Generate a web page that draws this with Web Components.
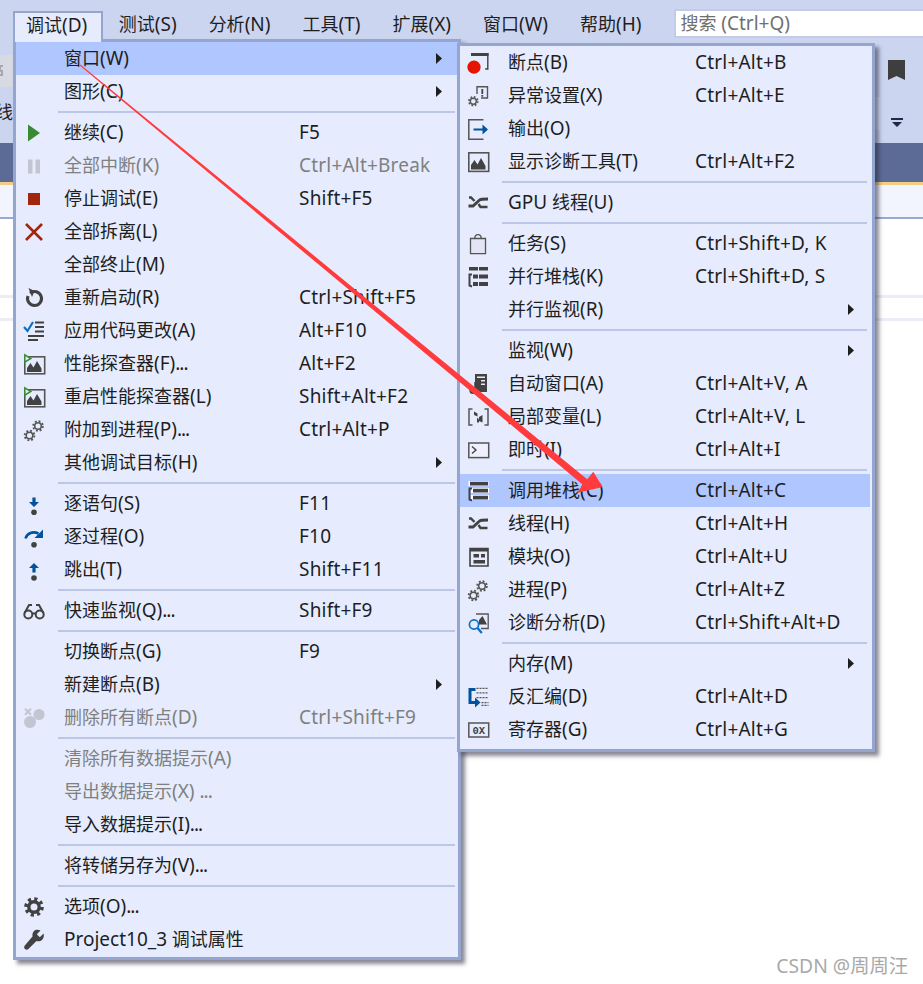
<!DOCTYPE html>
<html lang="zh"><head><meta charset="utf-8"><title>VS</title>
<style>
html,body{margin:0;padding:0;background:#fff;}
body{width:923px;height:984px;overflow:hidden;font-family:"Noto Sans","Noto Sans CJK SC",sans-serif;}
</style></head><body>
<vs-shell>
  <vs-menubar slot="bar">
    <vs-tab open>调试(D)</vs-tab><vs-tab>测试(S)</vs-tab><vs-tab>分析(N)</vs-tab><vs-tab>工具(T)</vs-tab><vs-tab>扩展(X)</vs-tab><vs-tab>窗口(W)</vs-tab><vs-tab>帮助(H)</vs-tab>
    <vs-search>搜索 (Ctrl+Q)</vs-search>
  </vs-menubar>
  <vs-menu style="--l:13px;--t:39px;--w:448px;--pb:1px;--label:235px;--z:2;--sepr:3px;--itemr:0px">
    <vs-item active arrow>窗口(W)</vs-item>
    <vs-item arrow>图形(C)</vs-item>
    <vs-sep></vs-sep>
    <vs-item icon="play" key="F5">继续(C)</vs-item>
    <vs-item icon="pause" key="Ctrl+Alt+Break" dis>全部中断(K)</vs-item>
    <vs-item icon="stop" key="Shift+F5">停止调试(E)</vs-item>
    <vs-item icon="x">全部拆离(L)</vs-item>
    <vs-item>全部终止(M)</vs-item>
    <vs-item icon="restart" key="Ctrl+Shift+F5">重新启动(R)</vs-item>
    <vs-item icon="apply" key="Alt+F10">应用代码更改(A)</vs-item>
    <vs-item icon="perf" key="Alt+F2">性能探查器(F)...</vs-item>
    <vs-item icon="perf" key="Shift+Alt+F2">重启性能探查器(L)</vs-item>
    <vs-item icon="gears" key="Ctrl+Alt+P">附加到进程(P)...</vs-item>
    <vs-item arrow>其他调试目标(H)</vs-item>
    <vs-sep></vs-sep>
    <vs-item icon="into" key="F11">逐语句(S)</vs-item>
    <vs-item icon="over" key="F10">逐过程(O)</vs-item>
    <vs-item icon="out" key="Shift+F11">跳出(T)</vs-item>
    <vs-sep></vs-sep>
    <vs-item icon="glasses" key="Shift+F9">快速监视(Q)...</vs-item>
    <vs-sep></vs-sep>
    <vs-item key="F9">切换断点(G)</vs-item>
    <vs-item arrow>新建断点(B)</vs-item>
    <vs-item icon="delbp" key="Ctrl+Shift+F9" dis>删除所有断点(D)</vs-item>
    <vs-sep></vs-sep>
    <vs-item dis>清除所有数据提示(A)</vs-item>
    <vs-item dis>导出数据提示(X) ...</vs-item>
    <vs-item>导入数据提示(I)...</vs-item>
    <vs-sep></vs-sep>
    <vs-item>将转储另存为(V)...</vs-item>
    <vs-sep></vs-sep>
    <vs-item icon="gear">选项(O)...</vs-item>
    <vs-item icon="wrench">Project10_3 调试属性</vs-item>
  </vs-menu>
  <vs-menu style="--l:457px;--t:43px;--w:418px;--pb:3px;--label:187px;--z:3;--sepr:5px;--itemr:2px">
    <vs-item icon="bp" key="Ctrl+Alt+B">断点(B)</vs-item>
    <vs-item icon="exc" key="Ctrl+Alt+E">异常设置(X)</vs-item>
    <vs-item icon="output">输出(O)</vs-item>
    <vs-item icon="chart" key="Ctrl+Alt+F2">显示诊断工具(T)</vs-item>
    <vs-sep></vs-sep>
    <vs-item icon="thread">GPU 线程(U)</vs-item>
    <vs-sep></vs-sep>
    <vs-item icon="task" key="Ctrl+Shift+D, K">任务(S)</vs-item>
    <vs-item icon="pstack" key="Ctrl+Shift+D, S">并行堆栈(K)</vs-item>
    <vs-item arrow>并行监视(R)</vs-item>
    <vs-sep></vs-sep>
    <vs-item arrow>监视(W)</vs-item>
    <vs-item icon="auto" key="Ctrl+Alt+V, A">自动窗口(A)</vs-item>
    <vs-item icon="locals" key="Ctrl+Alt+V, L">局部变量(L)</vs-item>
    <vs-item icon="imm" key="Ctrl+Alt+I">即时(I)</vs-item>
    <vs-sep></vs-sep>
    <vs-item icon="callstack" key="Ctrl+Alt+C" active>调用堆栈(C)</vs-item>
    <vs-item icon="thread" key="Ctrl+Alt+H">线程(H)</vs-item>
    <vs-item icon="module" key="Ctrl+Alt+U">模块(O)</vs-item>
    <vs-item icon="gears" key="Ctrl+Alt+Z">进程(P)</vs-item>
    <vs-item icon="diag" key="Ctrl+Shift+Alt+D">诊断分析(D)</vs-item>
    <vs-sep></vs-sep>
    <vs-item arrow>内存(M)</vs-item>
    <vs-item icon="disasm" key="Ctrl+Alt+D">反汇编(D)</vs-item>
    <vs-item icon="reg" key="Ctrl+Alt+G">寄存器(G)</vs-item>
  </vs-menu>
  <vs-callout></vs-callout>
  <vs-mark>CSDN @周周汪</vs-mark>
</vs-shell>
<script>
const D='#424242',B='#00539c',BG='#e6ecfd';
const gear=(x,y,r=5)=>{const R=r*.88,c=2*Math.PI*R/16;return `<circle cx="${x}" cy="${y}" r="${r*.6}" fill="none" stroke="#555" stroke-width="${r*.28}"/><circle cx="${x}" cy="${y}" r="${R}" fill="none" stroke="#555" stroke-width="${r*.34}" stroke-dasharray="${c} ${c}"/>`;};
const chart=`<rect x=".8" y=".8" width="19.9" height="18.6" fill="${BG}" stroke="#555" stroke-width="1.6"/><path d="M3 17.5V13l3.5-5 3 4.5L13 6l4.5 8v3.5z" fill="${D}"/>`;
const thread=`<g fill="none" stroke="${D}"><path d="M.5 13H5l6-5.5C12.5 6 14 6 20 6" stroke-width="2.8"/><path d="M1 4.5h2L6.5 8" stroke-width="2.4"/><path d="M10.5 11l2 3h7" stroke-width="2.4"/></g>`;
const ICONS={
play:`<path d="M4 1.5L16 10 4 18.5z" fill="#388a34"/>`,
pause:`<path d="M4 3.5h4.5v14H4zM11.5 3.5H16v14h-4.5z" fill="#c2c6d2"/>`,
stop:`<path d="M4 4h12v12H4z" fill="#a1260d"/>`,
x:`<path d="M2 2l16 16M18 2L2 18" stroke="#a1260d" stroke-width="2.6" fill="none"/>`,
restart:`<path d="M6 5.2A7 7 0 1 1 4 8" fill="none" stroke="${D}" stroke-width="3"/><path d="M4.5 0l6 3-2.5 6z" fill="${D}"/>`,
apply:`<path d="M0 6l3.5 4L9 1" fill="none" stroke="#0e70c0" stroke-width="2.2"/><path d="M11 .5h9v2h-9zM11 5h9v2h-9zM11 9.5h9v2h-9zM4 14h16v2H4zM4 18h10v2H4z" fill="${D}"/>`,
perf:`<rect x=".8" y="2.8" width="19.9" height="17" fill="${BG}" stroke="#555" stroke-width="1.6"/><path d="M3 18v-4l3.5-5 3 4.5L13 7l4.5 7.5V18z" fill="${D}"/><path d="M.8 .8l6 3.7-6 3.7z" fill="${BG}" stroke="#388a34" stroke-width="1.5"/>`,
gears:gear(14,6,5.5)+gear(5.5,15.5,5.5),
into:`<path d="M8.4 3.5h3.2V8H15l-5 5-5-5h3.4z" fill="${B}"/><circle cx="10" cy="18.2" r="2.8" fill="${D}"/>`,
over:`<path d="M1.5 11.5C3 6 9 4 14.5 6.5" fill="none" stroke="${B}" stroke-width="2.6"/><path d="M19 2.5V11h-8.5z" fill="${B}"/><circle cx="10" cy="17.7" r="2.8" fill="${D}"/>`,
out:`<path d="M10 3l5 5h-3.4v4.5H8.4V8H5z" fill="${B}"/><circle cx="10" cy="18" r="2.8" fill="${D}"/>`,
glasses:`<g fill="none" stroke="${D}" stroke-width="2"><circle cx="4.3" cy="13.5" r="4"/><circle cx="15.7" cy="13.5" r="4"/><path d="M8 12.5h4M.6 12L5 4h3M19.4 12L15 4h-3"/></g>`,
delbp:`<circle cx="6" cy="14" r="6" fill="#c2c6d2"/><circle cx="15" cy="6.5" r="5.6" fill="#c2c6d2"/><path d="M1 .8l6 6M7 .8l-6 6" stroke="#c2c6d2" stroke-width="2"/>`,
gear:`<circle cx="10" cy="10" r="5.2" fill="none" stroke="${D}" stroke-width="3.4"/><circle cx="10" cy="10" r="8" fill="none" stroke="${D}" stroke-width="3.6" stroke-dasharray="3.14 3.14"/>`,
wrench:`<path d="M19.5 3.5L15.8 7.2 12.8 4.2 16.5.5C13-1 8-.2 8.5 6.5L.8 15.5c-1 1.2-.8 2.6.2 3.5 1 1 2.4 1 3.4 0L12.5 11c4.5 1.5 8.5-2.5 7-7.5z" fill="${D}"/>`,
bp:`<path d="M3 0.8h16.8v15.2h-2.6" fill="none" stroke="${D}" stroke-width="1.4"/><path d="M3 0h17.5v3H3z" fill="${D}"/><circle cx="6" cy="14.2" r="6.6" fill="#e51400"/>`,
exc:`<path d="M9 8V.8h10.5V12H13" fill="none" stroke="#555" stroke-width="1.4"/><path d="M13.4 3h1.8v5h-1.8zM13.4 9h1.8v1.8h-1.8z" fill="${D}"/>`+gear(5.3,15.2,5),
output:`<path d="M15.5 .8H.8v19.5h14.7" fill="none" stroke="#555" stroke-width="1.5"/><path d="M5.5 9.5h9V5.5l5.5 5-5.5 5v-4h-9z" fill="${B}"/>`,
chart:chart,
thread:thread,
task:`<path d="M2.5 4.5h15v15.2h-15z" fill="#e3e5f6" stroke="#555" stroke-width="1.3"/><path d="M6.8 4.5C6.8 1.5 8 .6 10 .6s3.2.9 3.2 3.9" fill="none" stroke="#555" stroke-width="1.4"/>`,
pstack:`<path d="M1 0h9v3.5H1zM11 0h9v3.5h-9zM5 7.5h5v4H5zM11 7.5h9v4h-9zM5 15h5v4H5zM11 15h9v4h-9z" fill="${D}"/><path d="M4 7.5H1.5v11l2.5 1" fill="none" stroke="${D}" stroke-width="2"/>`,
auto:`<path d="M7 0h12v18H7z" fill="${D}"/><path d="M9 2.5h8v1.6H9zM13 6h4v1.6h-4zM13 9.5h4v1.6h-4z" fill="${BG}"/><circle cx="5" cy="16.5" r="3.6" fill="${D}"/><path d="M7 8v8" stroke="${D}" stroke-width="1.5"/>`,
locals:`<path d="M4.5 2H1v16h3.5M16.5 2H20v16h-3.5" fill="none" stroke="#555" stroke-width="1.5"/><path d="M6 4.5l3.5 2v3L6 8zM14.5 8l-3.5 2v4l3.5 1.5zM9 10.5l2 2v3H9z" fill="${D}"/>`,
imm:`<rect x=".8" y="3" width="19.9" height="14.6" fill="#eef1fd" stroke="#555" stroke-width="1.5"/><path d="M4 6.5l4 3.5-4 3.5" fill="none" stroke="${D}" stroke-width="1.4"/>`,
callstack:`<path d="M.5 0h20v5H.5zM3 7h18v5H3zM3 14h18v5H3z" fill="#fff"/><path d="M2 .8h18v3.6H2zM5 7.8h15v3.6H5zM5 14.8h15v3.6H5z" fill="${D}"/><path d="M4 7.5H1.5v11l2.5 1" fill="none" stroke="${D}" stroke-width="2"/>`,
module:`<path d="M2 1.5h18v17.5H2z" fill="${BG}" stroke="${D}" stroke-width="1.6"/><path d="M2 1h18v3.5H2zM5.5 7h5.5v3.5H5.5zM13 7h4v3.5h-4zM5.5 13h11.5v3.5H5.5z" fill="${D}"/>`,
diag:`<path d="M8 1h12.2v14.5H13" fill="${BG}" stroke="#555" stroke-width="1.3"/><path d="M11 7l3.5-4 4.5 8.5h-8z" fill="${D}"/><circle cx="6" cy="11.5" r="4.6" fill="${BG}" stroke="#0e70c0" stroke-width="1.7"/><path d="M9.5 15l4.3 5" stroke="#0e70c0" stroke-width="2.3"/>`,
disasm:`<path d="M.5 1h7v3H3.5v10H7v-3.5l5.5 5-5.5 5V17H.5z" fill="${B}"/><path d="M8.5 1.4h12M8.5 5.9h12M8.5 10.7h12M13.5 15.6h7M13.5 18.4h7" stroke="#555" stroke-width="1.3" stroke-dasharray="2 1" fill="none"/>`,
reg:`<rect x=".8" y="3" width="19.9" height="14" fill="none" stroke="#555" stroke-width="1.5"/><text x="10.7" y="14" text-anchor="middle" font-family="Liberation Mono,monospace" font-size="10.5" font-weight="700" fill="${D}">0X</text>`
};
/* Latin runs are set a size up from the CJK around them, as in the reference; trailing dots are tighter */
function latin(host){
  if(host.dataset.done)return;host.dataset.done='1';
  [...host.childNodes].forEach(n=>{
    if(n.nodeType!==3)return;
    const f=document.createDocumentFragment();
    n.textContent.split(/([\x21-\x7e]+(?: [\x21-\x7e]+)*)/).forEach((p,i)=>{
      if(!p)return;
      if(i%2){
        const s=document.createElement('span');
        const m=p.match(/^(.*?)(\.\.\.)$/);
        if(m){s.textContent=m[1];f.append(s);const d=document.createElement('span');d.className='d';d.textContent=m[2];f.append(d);}
        else{s.textContent=p;f.append(s);}
      } else f.append(p);
    });
    n.replaceWith(f);
  });
}
const LAT=`::slotted(span){font-size:19px;}::slotted(span.d){letter-spacing:-1px;}`;
function el(name,html,wrap){customElements.define(name,class extends HTMLElement{
  constructor(){super();this.attachShadow({mode:'open'}).innerHTML=html;}
  connectedCallback(){if(wrap)latin(this);}
});}
class Shell extends HTMLElement{constructor(){super();this.attachShadow({mode:'open'}).innerHTML=`<style>
:host{display:flex;flex-direction:column;position:relative;width:923px;height:984px;overflow:hidden;background:#fff;font-size:18px;color:#1e1e1e;}
.tools{height:101px;background:#ccd5f0;display:flex;justify-content:space-between;flex:none;}
.left{width:13px;display:flex;flex-direction:column;padding-top:13px;overflow:hidden;}
.btn{height:32px;background:#d8d9e2;display:flex;align-items:center;}
.clip{height:33px;margin-top:9px;line-height:33px;width:13px;overflow:hidden;white-space:nowrap;direction:rtl;}
.right{width:48px;display:flex;padding-top:18px;gap:8px;}
.lite{width:5px;height:33px;margin-top:37px;background:#d9e0f5;}
.rcol{display:flex;flex-direction:column;align-items:center;gap:38px;width:17px;}
.band{height:39px;background:#5c6b96;flex:none;}
.orange{height:3px;background:#f5cc84;flex:none;}
.tabs{height:32px;background:#f2f5fe;border-bottom:2px solid #9aaace;flex:none;}
.doc{flex:1;padding-top:76px;display:flex;flex-direction:column;gap:20px;}
.rule{height:3px;background:#ecedf4;}
</style>
<slot name="bar"></slot>
<div class="tools">
  <div class="left"><div class="btn"><svg width="4" height="14"><path d="M0 1h3v2H1v3h2v6H0v-2h1V8H0z" fill="#a8a8b0"/></svg></div><div class="clip">线</div></div>
  <div class="right"><div class="lite"></div><div class="rcol">
    <svg width="17" height="20" viewBox="0 0 17 20"><path d="M0 0h17v20l-8.5-4L0 20z" fill="#3e3e3e"/></svg>
    <svg width="12" height="9" viewBox="0 0 12 9"><path d="M0 0h12v2H0zM1 4h10L6 9z" fill="#1e2a4a"/></svg>
  </div></div>
</div>
<div class="band"></div><div class="orange"></div><div class="tabs"></div>
<div class="doc"><div class="rule"></div><div class="rule"></div></div>
<slot></slot>`;}}
customElements.define('vs-shell',Shell);
el('vs-menubar',`<style>:host{display:flex;height:42px;background:#ccd5f0;padding-left:13px;box-sizing:border-box;flex:none;}</style><slot></slot>`);
class Tab extends HTMLElement{constructor(){super();const o=this.hasAttribute('open');this.attachShadow({mode:'open'}).innerHTML=`<style>
:host{display:block;position:relative;z-index:5;margin-top:11px;height:31px;}
div{box-sizing:border-box;height:31px;line-height:27px;white-space:nowrap;padding:0 16px;}
.o{padding:0 13.5px 0 11px;background:#e6ecfd;border:solid #94a6cf;border-width:2.5px 2.5px 0 2.5px;line-height:25px;}
${LAT}
</style><div class="${o?'o':''}"><slot></slot></div>`;}
connectedCallback(){latin(this);}}
customElements.define('vs-tab',Tab);
el('vs-search',`<style>:host{display:block;flex:1;box-sizing:border-box;margin:9px 0 4px 16px;height:29px;background:#fff;border:2px solid #c3cce6;border-right:0;padding-left:5px;line-height:24px;color:#707070;white-space:nowrap;overflow:hidden;}${LAT}</style><slot></slot>`,true);
el('vs-menu',`<style>:host{display:block;position:absolute;left:var(--l);top:var(--t);width:var(--w);z-index:var(--z);box-sizing:border-box;background:#e6ecfd;border:3px solid #94a6cf;padding-bottom:var(--pb);box-shadow:4px 4px 4px rgba(40,40,60,.55);}</style><slot></slot>`);
class Item extends HTMLElement{constructor(){super();
  const ic=this.getAttribute('icon'),k=this.getAttribute('key')||'',a=this.hasAttribute('arrow');
  this.attachShadow({mode:'open'}).innerHTML=`<style>
:host{display:grid;grid-template-columns:48px var(--label) 1fr 22px;align-items:center;height:33px;margin-right:var(--itemr);white-space:nowrap;color:#1e1e1e;}
:host([dis]){color:#808080;}
:host([active]){background:#b0c6ff;}
.i{width:48px;height:33px;display:flex;align-items:center;padding-left:8px;box-sizing:border-box;}
.t{line-height:26px;padding-bottom:1px;}
.k{font-size:19px;line-height:26px;padding-bottom:1px;letter-spacing:.2px;}
svg{display:block;overflow:visible;}
.a{justify-self:start;}
${LAT}
</style>
<div class="i">${ic?`<svg width="20" height="20" viewBox="0 0 20 20">${ICONS[ic]}</svg>`:''}</div>
<div class="t"><slot></slot></div><div class="k">${k}</div>
<div class="a">${a?`<svg width="6" height="11" viewBox="0 0 6 11"><path d="M0 0l6 5.5L0 11z" fill="#1e1e1e"/></svg>`:''}</div>`;}
connectedCallback(){latin(this);}}
customElements.define('vs-item',Item);
el('vs-sep',`<style>:host{display:block;height:8px;padding:3px var(--sepr) 3px 42px;box-sizing:border-box;}div{height:2px;background:#bcc7e8;}</style><div></div>`);
el('vs-callout',`<style>:host{position:absolute;inset:0;z-index:6;pointer-events:none;display:block;}svg{display:block;}</style><svg width="923" height="984"><polygon points="80.3,64.6 333.3,271.4 587.2,479.3 593.3,471.7 602.7,487 576.7,493 582.8,484.7 330.7,274.6 79.7,65.4" fill="#ff3b3e"/></svg>`);
el('vs-mark',`<style>:host{position:absolute;right:15px;bottom:5px;color:#a9a9a9;font-size:19.3px;line-height:26px;white-space:nowrap;}</style><slot></slot>`);
</script>
</body></html>
